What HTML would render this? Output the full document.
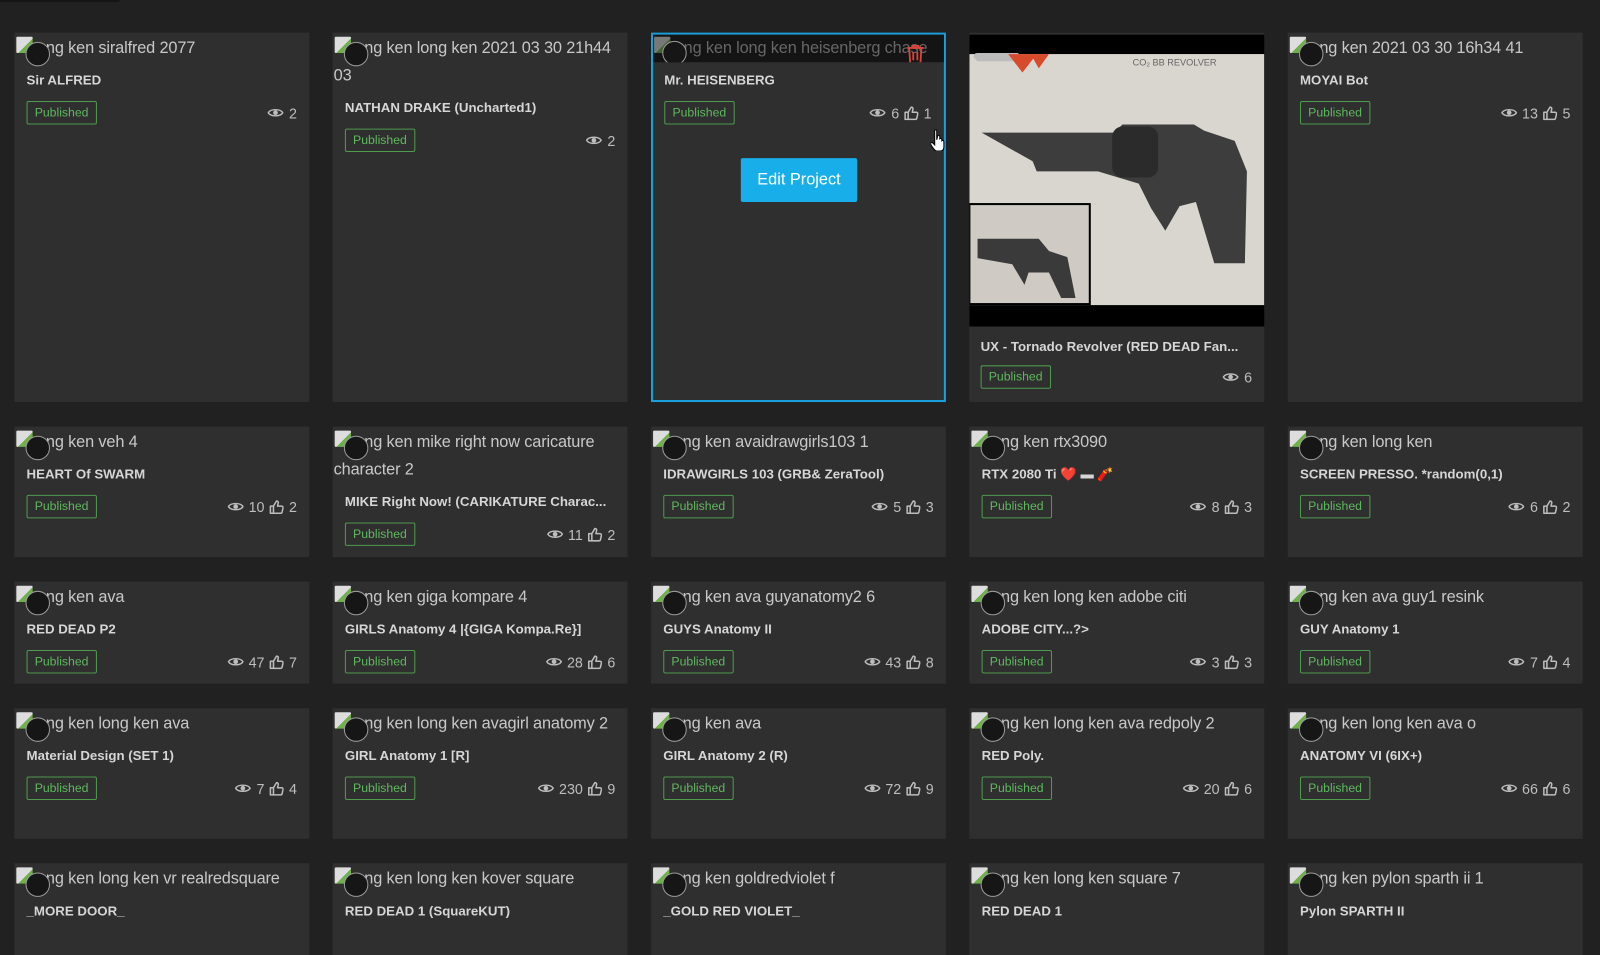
<!DOCTYPE html>
<html><head><meta charset="utf-8"><style>
*{box-sizing:border-box;margin:0;padding:0}
body{width:1600px;height:926px;background:#212121;overflow:hidden;position:relative;font-family:"Liberation Sans","Noto Sans CJK JP",sans-serif}
#wrap{position:absolute;left:0;top:0;width:1568px;height:908px;transform:scale(1.0204);transform-origin:0 0}
.topline{position:absolute;left:0;top:0;width:117px;height:2px;background:#151515}
.c{position:absolute;width:289px;background:#2f2f2f;padding:2px 10px 0 1px}
.alt{font-size:16px;line-height:27px;color:#c8c8c8;text-indent:30px;letter-spacing:-0.15px;white-space:normal;position:relative}
.bi{position:absolute;left:1px;top:2px;width:16px;height:16px;background:linear-gradient(135deg,#ddd 0 55%,#6fb04a 55%);border-radius:1px}
.cir{position:absolute;left:10px;top:7px;width:24px;height:24px;border-radius:50%;background:#161616;border:1px solid #9a9a9a}
.t{font-size:13px;font-weight:bold;color:#d6d6d6;line-height:18px;margin-top:9px;padding-left:11px;white-space:nowrap;overflow:hidden}
.row{display:flex;justify-content:space-between;align-items:center;margin-top:11px;padding-left:11px;padding-right:2px}
.b{font-size:12px;color:#5fb85f;border:1px solid #4e9a4e;border-radius:2px;padding:0 7px;height:23px;line-height:21px}
.s{font-size:14px;color:#bdbdbd;display:flex;align-items:center;gap:5px}
.s svg{display:block}
</style></head><body>
<svg width="0" height="0" style="position:absolute"><defs>
<symbol id="eye" viewBox="0 0 18 12"><path d="M1 6C3.5 1.5 14.5 1.5 17 6C14.5 10.5 3.5 10.5 1 6Z" fill="none" stroke="#bdbdbd" stroke-width="1.6"/><circle cx="9" cy="6" r="2.6" fill="#bdbdbd"/></symbol>
<symbol id="th" viewBox="0 0 14 14"><path d="M1 6h3v7H1zM4 6l3-5c1.5 0 2 1 1.6 2.5L8 6h4c1 0 1.6.8 1.4 1.7l-1 4.3c-.2.7-.8 1-1.4 1H4" fill="none" stroke="#bdbdbd" stroke-width="1.5" stroke-linejoin="round"/></symbol>
</defs></svg>
<div id="wrap"><div class="topline"></div><div id="g"></div></div>
<script>
const X=[14,326,638,950,1262];
const R=[[32,362],[418,128],[570,100],[694,128],[846,90]];
const D=[
[["ng ken siralfred 2077","Sir ALFRED",2,null],["ng ken long ken 2021 03 30 21h44 03","NATHAN DRAKE (Uncharted1)",2,null],["H","Mr. HEISENBERG",6,1],["IMG","UX - Tornado Revolver (RED DEAD Fan...",6,null],["ng ken 2021 03 30 16h34 41","MOYAI Bot",13,5]],
[["ng ken veh 4","HEART Of SWARM",10,2],["ng ken mike right now caricature character 2","MIKE Right Now! (CARIKATURE Charac...",11,2],["ng ken avaidrawgirls103 1","IDRAWGIRLS 103 (GRB&amp; ZeraTool)",5,3],["ng ken rtx3090","RTX 2080 Ti ❤️ ▬ 🧨",8,3],["ng ken long ken","SCREEN PRESSO. *random(0,1)",6,2]],
[["ng ken ava","RED DEAD P2",47,7],["ng ken giga kompare 4","GIRLS Anatomy 4 |{GIGA Kompa.Re}]",28,6],["ng ken ava guyanatomy2 6","GUYS Anatomy II",43,8],["ng ken long ken adobe citi","ADOBE CITY...?&gt;",3,3],["ng ken ava guy1 resink","GUY Anatomy 1",7,4]],
[["ng ken long ken ava","Material Design (SET 1)",7,4],["<span style='white-space:nowrap'>ng ken long ken avagirl anatomy 2</span>","GIRL Anatomy 1 [R]",230,9],["ng ken ava","GIRL Anatomy 2 (R)",72,9],["ng ken long ken ava redpoly 2","RED Poly.",20,6],["ng ken long ken ava o","ANATOMY VI (6IX+)",66,6]],
[["ng ken long ken vr realredsquare","_MORE DOOR_",0,null],["ng ken long ken kover square","RED DEAD 1 (SquareKUT)",0,null],["ng ken goldredviolet f","_GOLD RED VIOLET_",0,null],["ng ken long ken square 7","RED DEAD 1",0,null],["ng ken pylon sparth ii 1","Pylon SPARTH II",0,null]]];
const eye='<svg width="16" height="11"><use href="#eye"/></svg>',th='<svg width="14" height="14"><use href="#th"/></svg>';
let h='';
D.forEach((row,ri)=>row.forEach((d,ci)=>{
 const [y,hh]=R[ri];let x=X[ci];
 const st=`<div class="s">${eye}<span>${d[2]}</span>${d[3]!=null?th+'<span>'+d[3]+'</span>':''}</div>`;
 const body=`<div class="t">${d[1]}</div><div class="row"><span class="b">Published</span>${st}</div>`;
 if(d[0]=="IMG"){
  h+=`<div class="c" style="left:${x}px;top:${y}px;height:${hh}px;padding:2px 10px 0 0">
  <div style="position:relative;height:286px;background:#000;width:289px">
   <svg width="289" height="286" style="position:absolute;left:0;top:0"><rect x="0" y="19" width="289" height="246" fill="#d9d5cf"/>
   <path d="M4 22 q0 -4 4 -4 h40 v8 h-40z" fill="#bbb"/>
   <path d="M38 19 l14 18 l14-18z M60 19 l8 14 l10 -14z" fill="#d84a2c"/>
   <text x="160" y="30" font-size="9" fill="#666" font-family="Liberation Sans">CO₂ BB REVOLVER</text>
   <path d="M12 96h130l8-8h70l10 6 30 10 12 30 -2 90 -30 0 -18-60 -16 4 -14 24 -14-22 -12-24 -40-12 -60 0 -4-10z" fill="#3d3d3d"/>
   <rect x="140" y="90" width="45" height="50" rx="10" fill="#2b2b2b"/>
   <rect x="0" y="166" width="118" height="98" fill="#cfcbc4" stroke="#000" stroke-width="2"/>
   <path d="M8 200h60l10 12 18 6 8 40 -14 0 -12-25 -20 0 -4 12 -12-20 -34 -6z" fill="#3a3a3a"/>
   </svg></div>
  <div class="t" style="margin-top:11px">${d[1]}</div><div class="row" style="margin-top:9px"><span class="b">Published</span>${st}</div></div>`;
 } else if(d[0]=="H"){
  h+=`<div class="c" style="left:${x}px;top:${y}px;height:${hh}px;border:2px solid #1a9fdc;padding:0 10px 0 0">
  <div class="alt" style="background:#141414;color:#666;white-space:nowrap;overflow:hidden;height:27px;margin-right:-10px;padding-top:0">ng ken long ken heisenberg chase<span class="bi" style="opacity:.5"></span><span class="cir" style="left:9px;top:6px"></span>
  <svg style="position:absolute;left:248px;top:9px" width="18" height="20" viewBox="0 0 18 20"><path d="M1 4h16M6 4V2h6v2M3 4l1 15h10l1-15M7 8v8M11 8v8" fill="none" stroke="#d9453c" stroke-width="1.8"/></svg></div>
  ${body}
  <div style="position:absolute;left:86px;top:121px;width:114px;height:43px;background:#17aeea;color:#fff;font-size:16px;line-height:43px;text-align:center;border-radius:2px">Edit Project</div>
  <svg style="position:absolute;left:272px;top:92px" width="16" height="22" viewBox="0 0 16 22"><path d="M4 2c0-1 2-1 2 0v9l1-4c1-1 2 0 2 1l0 2c1-1 2 0 2 1v1c1-1 2 0 2 1v5c0 3-2 4-4 4H6c-2 0-3-2-5-5l-1-2c0-1 1-2 2-1l2 2z" fill="#fff" stroke="#000" stroke-width="1"/></svg></div>`;
 } else {
  h+=`<div class="c" style="left:${x}px;top:${y}px;height:${hh}px"><div class="alt">${d[0]}<span class="bi"></span><span class="cir"></span></div>${ri==4?`<div class="t">${d[1]}</div>`:body}</div>`;
 }
}));
document.getElementById('g').innerHTML=h;
</script>
</body></html>
